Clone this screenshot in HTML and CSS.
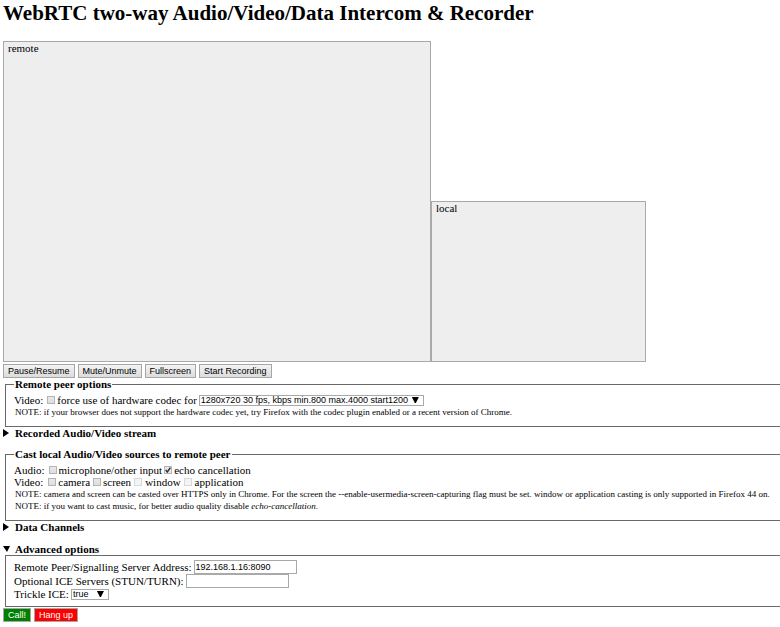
FILE: index.html
```html
<!DOCTYPE html>
<html lang="en">
<head>
<meta charset="utf-8">
<title>WebRTC two-way Audio/Video/Data Intercom &amp; Recorder</title>
<link rel="stylesheet" href="styles.css">
</head>
<body>
<h1>WebRTC two-way Audio/Video/Data Intercom &amp; Recorder</h1>
<div class="videos">
  <div class="video remote">remote</div>
  <div class="video local">local</div>
</div>
<div class="buttons">
  <button type="button">Pause/Resume</button>
  <button type="button">Mute/Unmute</button>
  <button type="button">Fullscreen</button>
  <button type="button">Start Recording</button>
</div>
<fieldset>
  <legend>Remote peer options</legend>
  <div class="row">
    <span class="name">Video:</span>
    <label class="check"><input type="checkbox">force use of hardware codec for</label>
    <span class="select"><select class="format" aria-label="Video format"><option>1280x720 30 fps, kbps min.800 max.4000 start1200</option></select></span>
  </div>
  <p class="note">NOTE: if your browser does not support the hardware codec yet, try Firefox with the codec plugin enabled or a recent version of Chrome.</p>
</fieldset>
<details>
  <summary>Recorded Audio/Video stream</summary>
</details>
<fieldset>
  <legend>Cast local Audio/Video sources to remote peer</legend>
  <div class="row">
    <span class="name">Audio:</span>
    <label class="check"><input type="checkbox">microphone/other input</label>
    <label class="check"><input type="checkbox" checked>echo cancellation</label>
  </div>
  <div class="row sources">
    <span class="name">Video:</span>
    <label class="check"><input type="checkbox">camera</label>
    <label class="check"><input type="checkbox">screen</label>
    <label class="check"><input type="checkbox" disabled>window</label>
    <label class="check"><input type="checkbox" disabled>application</label>
  </div>
  <p class="note">NOTE: camera and screen can be casted over HTTPS only in Chrome. For the screen the --enable-usermedia-screen-capturing flag must be set. window or application casting is only supported in Firefox 44 on.</p>
  <p class="note">NOTE: if you want to cast music, for better audio quality disable <i>echo-cancellation</i>.</p>
</fieldset>
<details>
  <summary>Data Channels</summary>
</details>
<details class="advanced" open>
  <summary>Advanced options</summary>
  <fieldset>
    <div class="row field"><label for="server">Remote Peer/Signalling Server Address:</label><input id="server" type="text" value="192.168.1.16:8090"></div>
    <div class="row field"><label for="ice">Optional ICE Servers (STUN/TURN):</label><input id="ice" type="text"></div>
    <div class="row"><label for="trickle">Trickle ICE:</label><span class="select"><select id="trickle"><option>true</option></select></span></div>
  </fieldset>
</details>
<div class="buttons">
  <button type="button" class="call">Call!</button>
  <button type="button" class="hangup">Hang up</button>
</div>
</body>
</html>
```
FILE: styles.css
```css
* {
  box-sizing: border-box;
}

body {
  margin: 0 0 0 3px;
  background: #fff;
  color: #000;
  font: 11px/12px "Liberation Serif", "Times New Roman", serif;
  overflow-x: hidden;
}

h1 {
  margin: 0 0 15px;
  font-size: 21px;
  line-height: 26px;
}

.videos {
  display: flex;
  align-items: flex-end;
  margin-bottom: 2px;
}

.video {
  padding: 0 4px;
  border: 1px solid #a9a9a9;
  background: #eee;
}

.remote {
  width: 428px;
  aspect-ratio: 428 / 321;
}

.local {
  width: 215px;
  aspect-ratio: 215 / 161;
}

.buttons {
  display: flex;
  gap: 3px;
}

button {
  height: 14px;
  margin: 0;
  padding: 0 4px;
  border: 1px solid #a6a6a6;
  border-radius: 0;
  background: linear-gradient(#f4f4f4, #dcdcdc);
  color: #000;
  font: 9px/12px "Liberation Sans", Arial, sans-serif;
  white-space: nowrap;
}

.call {
  background: #008000;
  color: #fff;
}

.hangup {
  background: #f00;
  color: #fff;
}

fieldset {
  min-width: 0;
  margin: 0 0 0 2px;
  padding: 4px 0 8px 8px;
  border: 1px solid #696969;
  border-right: 0;
}

legend {
  padding: 0 1px;
  font-weight: bold;
}

.row {
  display: flex;
  align-items: center;
  height: 12px;
  gap: 2px;
  white-space: nowrap;
}

.sources {
  gap: 3px;
}

.field {
  height: 14px;
}

.name {
  margin-right: 2px;
}

.check {
  display: flex;
  align-items: center;
  gap: 2px;
}

.check:has(:disabled) {
  gap: 3px;
}

.note {
  margin: 0 0 0 1px;
  font-size: 9px;
  white-space: nowrap;
}

input,
select {
  appearance: none;
  margin: 0;
  border: 1px solid #a9a9a9;
  border-radius: 0;
  background: #fff;
  color: #000;
  font: 9px/11px "Liberation Sans", Arial, sans-serif;
}

input[type="text"] {
  width: 103px;
  height: 14px;
  padding: 0 1px;
}

input[type="checkbox"] {
  width: 8px;
  height: 8px;
  border-color: #b4b4b4;
  background: linear-gradient(#e8e8e8, #dedede);
}

input[type="checkbox"]:checked {
  background: #e8e8e8 url("data:image/svg+xml,%3Csvg xmlns='http://www.w3.org/2000/svg' viewBox='0 0 6 6'%3E%3Cpath d='M.7 3l1.6 2L5.4.6' fill='none' stroke='%23333' stroke-width='1.5'/%3E%3C/svg%3E");
}

input[type="checkbox"]:disabled {
  border-color: #d8d8d8;
  background: #f4f4f4;
}

.select {
  display: grid;
  align-items: center;
}

.select::after {
  content: "";
  grid-area: 1 / 1;
  justify-self: end;
  width: 7px;
  height: 6px;
  margin-right: 5px;
  background: #000;
  clip-path: polygon(0 0, 7px 0, 4px 6px, 3px 6px);
  pointer-events: none;
}

select {
  grid-area: 1 / 1;
  height: 11px;
  padding: 0 19px 0 1px;
  line-height: 9px;
}

.format {
  width: 225px;
  padding-right: 12px;
}

summary {
  display: flex;
  align-items: center;
  gap: 5px;
  font-weight: bold;
}

summary::before {
  content: "";
  width: 7px;
  height: 8px;
  background: #000;
  clip-path: polygon(0 0, 6px 4px, 0 8px);
}

details[open] > summary::before {
  clip-path: polygon(0 1px, 7px 1px, 4px 7px);
}

details + fieldset {
  margin-top: 9px;
}

.advanced {
  margin: 10px 0 1px;
}

.advanced fieldset {
  padding-bottom: 6px;
}
```
